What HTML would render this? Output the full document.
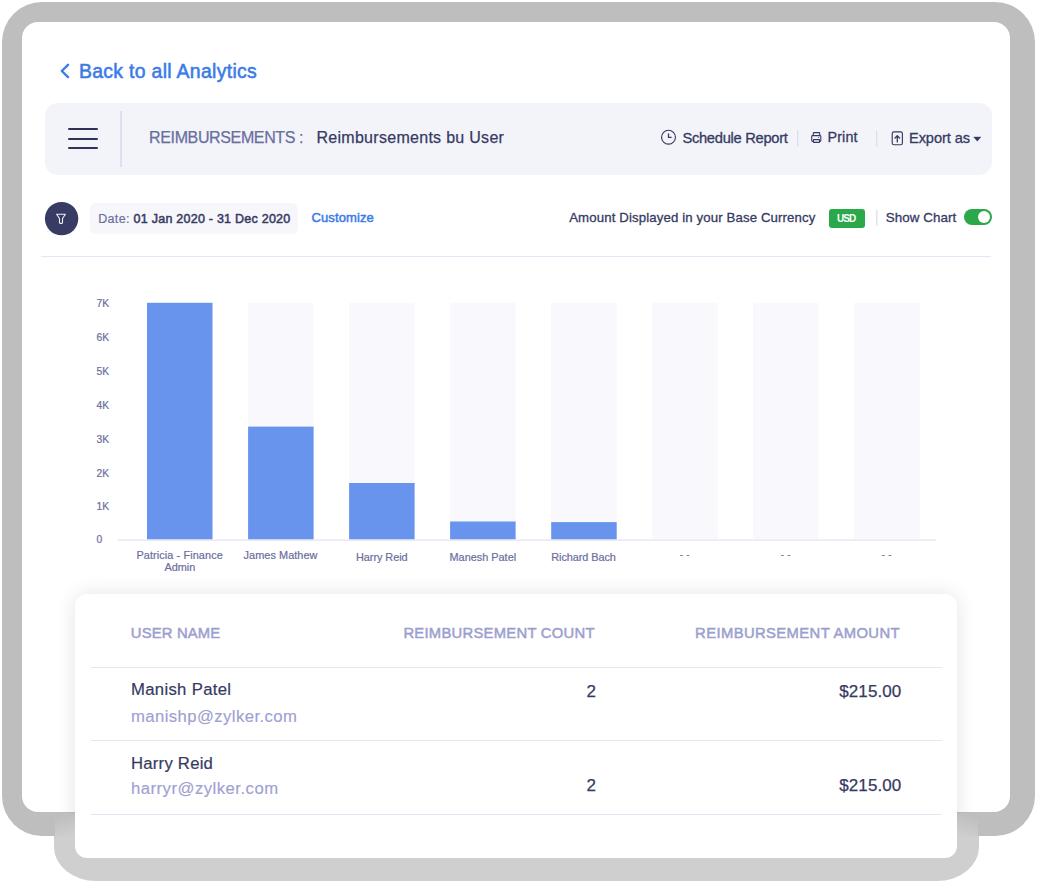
<!DOCTYPE html>
<html><head><meta charset="utf-8"><style>
html,body{margin:0;padding:0;background:#ffffff;}
body{width:1037px;height:883px;position:relative;overflow:hidden;font-family:"Liberation Sans",sans-serif;}
.t{position:absolute;white-space:pre;line-height:1;font-family:"Liberation Sans",sans-serif;}
.a{position:absolute;}
</style></head><body>
<!-- card frame (behind main frame) -->
<!-- main frame -->
<div class="a" style="left:2.4px;top:2.4px;width:1032.3px;height:833.4px;background:#bebebe;border-radius:40px;"></div>
<div class="a" style="left:22.2px;top:21.8px;width:987.8px;height:790.7px;background:#ffffff;border-radius:16px;"></div>
<!-- back chevron -->
<svg class="a" style="left:0;top:0" width="1037" height="300" viewBox="0 0 1037 300">
  <path d="M68 64.8 L61.8 71 L68 77.1" fill="none" stroke="#3b7be8" stroke-width="2.4" stroke-linecap="round" stroke-linejoin="round"/>
</svg>
<!-- header bar -->
<div class="a" style="left:45px;top:103px;width:947px;height:72px;background:#f3f4f9;border-radius:13px;"></div>
<div class="a" style="left:68px;top:128.2px;width:30.2px;height:2.2px;background:#2f3159;border-radius:1.2px;"></div>
<div class="a" style="left:68px;top:137.8px;width:30.2px;height:2.2px;background:#2f3159;border-radius:1.2px;"></div>
<div class="a" style="left:68px;top:147.3px;width:30.2px;height:2.2px;background:#2f3159;border-radius:1.2px;"></div>
<div class="a" style="left:120.3px;top:111px;width:2.2px;height:56px;background:#dedff2;"></div>
<svg class="a" style="left:0;top:0" width="1037" height="300" viewBox="0 0 1037 300">
  <!-- clock -->
  <circle cx="668.5" cy="137.2" r="6.95" fill="none" stroke="#363a63" stroke-width="1.15"/>
  <path d="M668.5 133.4 V137.4 H671.6" fill="none" stroke="#363a63" stroke-width="1.3"/>
  <!-- printer -->
  <path d="M813.3 135.1 V133.3 Q813.3 132.6 814 132.6 H819.1 Q819.7 132.6 819.7 133.3 V135.1" fill="none" stroke="#363a63" stroke-width="1.1"/>
  <path d="M813.3 141.4 H812.6 Q811.7 141.4 811.7 140.5 V136.4 Q811.7 135.6 812.6 135.6 H820.0 Q820.8 135.6 820.8 136.4 V140.5 Q820.8 141.4 820.0 141.4 H819.6" fill="none" stroke="#363a63" stroke-width="1.1"/>
  <rect x="813.4" y="139.6" width="6.2" height="2.8" rx="0.5" fill="none" stroke="#363a63" stroke-width="1.1"/>
  <circle cx="818.6" cy="137.5" r="0.5" fill="#363a63"/>
  <!-- export -->
  <rect x="892.2" y="131.9" width="10.2" height="12.8" rx="1.8" fill="none" stroke="#363a63" stroke-width="1.15"/>
  <path d="M897.3 141.9 V135.8 M895 138 L897.3 135.7 L899.6 138" fill="none" stroke="#363a63" stroke-width="1.3" stroke-linecap="round" stroke-linejoin="round"/>
  <path d="M973.6 136.9 H981.0 L977.3 141.3 Z" fill="#363a63" stroke="#363a63" stroke-width="0.3" stroke-linejoin="round"/>
  <!-- separators -->
  <rect x="797" y="130.4" width="1.3" height="16.3" fill="#dcdcef"/>
  <rect x="876" y="130.4" width="1.3" height="16.3" fill="#dcdcef"/>
  <!-- filter circle -->
  <circle cx="61.6" cy="218.6" r="16.7" fill="#383b64"/>
  <path d="M56.6 214.3 H65.4 L62.5 218.5 V222.8 Q62.5 223.4 61.9 223.4 H60.1 Q59.5 223.4 59.5 222.8 V218.5 Z" fill="none" stroke="#eeeef5" stroke-width="1.1" stroke-linejoin="round"/>
  <rect x="876.2" y="210" width="1.3" height="16" fill="#dcdcef"/>
</svg>
<!-- date pill -->
<div class="a" style="left:90.2px;top:203px;width:207.8px;height:31.4px;background:#f7f7fb;border-radius:6px;"></div>
<!-- USD badge -->
<div class="a" style="left:829px;top:209px;width:35.6px;height:18.8px;background:#2aa84a;border-radius:3px;"></div>
<!-- toggle -->
<div class="a" style="left:964px;top:208.9px;width:28px;height:16.4px;background:#2aa84a;border-radius:8.2px;"></div>
<div class="a" style="left:977.5px;top:210.8px;width:12.6px;height:12.6px;background:#ffffff;border-radius:50%;"></div>
<!-- rule -->
<div class="a" style="left:41px;top:256px;width:950px;height:1px;background:#e6e6f4;"></div>
<!-- chart -->
<svg class="a" style="left:0;top:0" width="1037" height="600" viewBox="0 0 1037 600">
  <g fill="#f8f8fd">
    <rect x="147" y="302.8" width="65.5" height="236.8"/>
    <rect x="248.1" y="302.8" width="65.5" height="236.8"/>
    <rect x="349.1" y="302.8" width="65.5" height="236.8"/>
    <rect x="450.1" y="302.8" width="65.5" height="236.8"/>
    <rect x="551.2" y="302.8" width="65.5" height="236.8"/>
    <rect x="652.2" y="302.8" width="65.5" height="236.8"/>
    <rect x="753.2" y="302.8" width="65.5" height="236.8"/>
    <rect x="854.2" y="302.8" width="65.5" height="236.8"/>
  </g>
  <g fill="#6894ee">
    <rect x="147" y="302.8" width="65.5" height="236.8"/>
    <rect x="248.1" y="426.6" width="65.5" height="113"/>
    <rect x="349.1" y="483" width="65.5" height="56.6"/>
    <rect x="450.1" y="521.5" width="65.5" height="18.1"/>
    <rect x="551.2" y="522.1" width="65.5" height="17.5"/>
  </g>
  <rect x="118" y="539.4" width="818" height="1.4" fill="#e6e6f3"/>
</svg>
<!-- table card -->
<div class="a" style="left:0;top:540px;width:1037px;height:272.5px;overflow:hidden;"><div class="a" style="left:75px;top:53.8px;width:882.4px;height:264px;border-radius:12px;box-shadow:0 0 20px rgba(0,0,0,0.11);"></div></div>
<div class="a" style="left:54.4px;top:835.5px;width:924.2px;height:45px;background:#cfcfcf;border-radius:0 0 42px 42px / 0 0 34px 34px;"></div>
<div class="a" style="left:54.6px;top:812.5px;width:20.4px;height:23px;background:linear-gradient(165deg, rgba(207,207,207,0) 15%, rgba(207,207,207,1) 100%);"></div>
<div class="a" style="left:957.4px;top:812.5px;width:21px;height:23px;background:linear-gradient(195deg, rgba(207,207,207,0) 15%, rgba(207,207,207,1) 100%);"></div>
<div class="a" style="left:75px;top:593.8px;width:882.4px;height:264px;background:#ffffff;border-radius:12px;"></div>
<div class="a" style="left:91px;top:666.5px;width:851px;height:1.2px;background:#e6e6f4;"></div>
<div class="a" style="left:91px;top:740px;width:851px;height:1.2px;background:#e6e6f4;"></div>
<div class="a" style="left:91px;top:813.8px;width:851px;height:1.2px;background:#e6e6f4;"></div>

<span class="t" style="left:79.00px;top:62.00px;font-size:19.4px;font-weight:400;color:#3b7be8;letter-spacing:0.318px;-webkit-text-stroke:0.55px #3b7be8">Back to all Analytics</span>
<span class="t" style="left:149.10px;top:130.00px;font-size:16px;font-weight:400;color:#6a6e9e;letter-spacing:-0.371px;-webkit-text-stroke:0.25px #6a6e9e">REIMBURSEMENTS :</span>
<span class="t" style="left:316.40px;top:130.00px;font-size:16px;font-weight:400;color:#363a63;letter-spacing:0.292px;-webkit-text-stroke:0.25px #363a63">Reimbursements bu User</span>
<span class="t" style="left:682.40px;top:131.00px;font-size:14.7px;font-weight:400;color:#363a63;letter-spacing:-0.281px;-webkit-text-stroke:0.3px #363a63">Schedule Report</span>
<span class="t" style="left:827.50px;top:130.00px;font-size:14.4px;font-weight:400;color:#363a63;letter-spacing:0.102px;-webkit-text-stroke:0.3px #363a63">Print</span>
<span class="t" style="left:909.00px;top:131.00px;font-size:14.6px;font-weight:400;color:#363a63;letter-spacing:-0.081px;-webkit-text-stroke:0.3px #363a63">Export as</span>
<span class="t" style="left:98.30px;top:213.00px;font-size:12.5px;font-weight:400;color:#6a6e9e;letter-spacing:0.299px;-webkit-text-stroke:0.2px #6a6e9e">Date:</span>
<span class="t" style="left:133.60px;top:213.00px;font-size:12.5px;font-weight:400;color:#363a63;letter-spacing:0.244px;-webkit-text-stroke:0.5px #363a63">01 Jan 2020 - 31 Dec 2020</span>
<span class="t" style="left:311.50px;top:211.00px;font-size:13px;font-weight:400;color:#3b7be8;letter-spacing:0.115px;-webkit-text-stroke:0.5px #3b7be8">Customize</span>
<span class="t" style="left:569.20px;top:211.00px;font-size:13.2px;font-weight:400;color:#363a63;letter-spacing:0.136px;-webkit-text-stroke:0.3px #363a63">Amount Displayed in your Base Currency</span>
<span class="t" style="left:837.00px;top:214.00px;font-size:10px;font-weight:700;color:#ffffff;letter-spacing:-0.946px">USD</span>
<span class="t" style="left:885.80px;top:211.00px;font-size:13.4px;font-weight:400;color:#363a63;letter-spacing:0.062px;-webkit-text-stroke:0.3px #363a63">Show Chart</span>
<span class="t" style="left:96.50px;top:299.00px;font-size:10.3px;font-weight:400;color:#6a6e9e;letter-spacing:0.000px;-webkit-text-stroke:0.2px #6a6e9e">7K</span>
<span class="t" style="left:96.50px;top:333.00px;font-size:10.3px;font-weight:400;color:#6a6e9e;letter-spacing:0.000px;-webkit-text-stroke:0.2px #6a6e9e">6K</span>
<span class="t" style="left:96.50px;top:367.00px;font-size:10.3px;font-weight:400;color:#6a6e9e;letter-spacing:0.000px;-webkit-text-stroke:0.2px #6a6e9e">5K</span>
<span class="t" style="left:96.50px;top:401.00px;font-size:10.3px;font-weight:400;color:#6a6e9e;letter-spacing:0.000px;-webkit-text-stroke:0.2px #6a6e9e">4K</span>
<span class="t" style="left:96.50px;top:435.00px;font-size:10.3px;font-weight:400;color:#6a6e9e;letter-spacing:0.000px;-webkit-text-stroke:0.2px #6a6e9e">3K</span>
<span class="t" style="left:96.50px;top:469.00px;font-size:10.3px;font-weight:400;color:#6a6e9e;letter-spacing:0.000px;-webkit-text-stroke:0.2px #6a6e9e">2K</span>
<span class="t" style="left:96.50px;top:502.00px;font-size:10.3px;font-weight:400;color:#6a6e9e;letter-spacing:0.000px;-webkit-text-stroke:0.2px #6a6e9e">1K</span>
<span class="t" style="left:96.50px;top:535.00px;font-size:10.3px;font-weight:400;color:#6a6e9e;letter-spacing:0.000px;-webkit-text-stroke:0.2px #6a6e9e">0</span>
<span class="t" style="left:136.40px;top:550.00px;font-size:10.9px;font-weight:400;color:#6a6e9e;letter-spacing:0.095px;-webkit-text-stroke:0.2px #6a6e9e">Patricia - Finance</span>
<span class="t" style="left:164.39px;top:562.00px;font-size:10.9px;font-weight:400;color:#6a6e9e;letter-spacing:0.000px;-webkit-text-stroke:0.2px #6a6e9e">Admin</span>
<span class="t" style="left:243.60px;top:550.00px;font-size:10.9px;font-weight:400;color:#6a6e9e;letter-spacing:0.057px;-webkit-text-stroke:0.2px #6a6e9e">James Mathew</span>
<span class="t" style="left:356.00px;top:552.00px;font-size:10.9px;font-weight:400;color:#6a6e9e;letter-spacing:-0.054px;-webkit-text-stroke:0.2px #6a6e9e">Harry Reid</span>
<span class="t" style="left:449.50px;top:552.00px;font-size:10.9px;font-weight:400;color:#6a6e9e;letter-spacing:0.002px;-webkit-text-stroke:0.2px #6a6e9e">Manesh Patel</span>
<span class="t" style="left:551.30px;top:552.00px;font-size:10.9px;font-weight:400;color:#6a6e9e;letter-spacing:-0.074px;-webkit-text-stroke:0.2px #6a6e9e">Richard Bach</span>
<span class="t" style="left:679.47px;top:549.00px;font-size:10.9px;font-weight:400;color:#6a6e9e;letter-spacing:0.000px">- -</span>
<span class="t" style="left:780.47px;top:549.00px;font-size:10.9px;font-weight:400;color:#6a6e9e;letter-spacing:0.000px">- -</span>
<span class="t" style="left:881.47px;top:549.00px;font-size:10.9px;font-weight:400;color:#6a6e9e;letter-spacing:0.000px">- -</span>
<span class="t" style="left:130.80px;top:626.00px;font-size:14.8px;font-weight:400;color:#9c9fce;letter-spacing:0.175px;-webkit-text-stroke:0.5px #9c9fce">USER NAME</span>
<span class="t" style="left:403.40px;top:626.00px;font-size:14.8px;font-weight:400;color:#9c9fce;letter-spacing:0.263px;-webkit-text-stroke:0.5px #9c9fce">REIMBURSEMENT COUNT</span>
<span class="t" style="left:695.10px;top:626.00px;font-size:14.8px;font-weight:400;color:#9c9fce;letter-spacing:0.391px;-webkit-text-stroke:0.5px #9c9fce">REIMBURSEMENT AMOUNT</span>
<span class="t" style="left:131.00px;top:682.00px;font-size:16.7px;font-weight:400;color:#363a63;letter-spacing:0.322px;-webkit-text-stroke:0.2px #363a63">Manish Patel</span>
<span class="t" style="left:131.00px;top:709.00px;font-size:16.7px;font-weight:400;color:#9ea1d2;letter-spacing:0.416px;-webkit-text-stroke:0.15px #9ea1d2">manishp@zylker.com</span>
<span class="t" style="left:131.00px;top:756.00px;font-size:16.7px;font-weight:400;color:#363a63;letter-spacing:0.237px;-webkit-text-stroke:0.2px #363a63">Harry Reid</span>
<span class="t" style="left:131.00px;top:781.00px;font-size:16.7px;font-weight:400;color:#9ea1d2;letter-spacing:0.485px;-webkit-text-stroke:0.15px #9ea1d2">harryr@zylker.com</span>
<span class="t" style="left:586.60px;top:683.00px;font-size:17px;font-weight:400;color:#363a63;letter-spacing:0.000px;-webkit-text-stroke:0.25px #363a63">2</span>
<span class="t" style="left:839.30px;top:683.00px;font-size:17px;font-weight:400;color:#363a63;letter-spacing:0.084px;-webkit-text-stroke:0.25px #363a63">$215.00</span>
<span class="t" style="left:586.60px;top:777.00px;font-size:17px;font-weight:400;color:#363a63;letter-spacing:0.000px;-webkit-text-stroke:0.25px #363a63">2</span>
<span class="t" style="left:839.30px;top:777.00px;font-size:17px;font-weight:400;color:#363a63;letter-spacing:0.084px;-webkit-text-stroke:0.25px #363a63">$215.00</span>
</body></html>
